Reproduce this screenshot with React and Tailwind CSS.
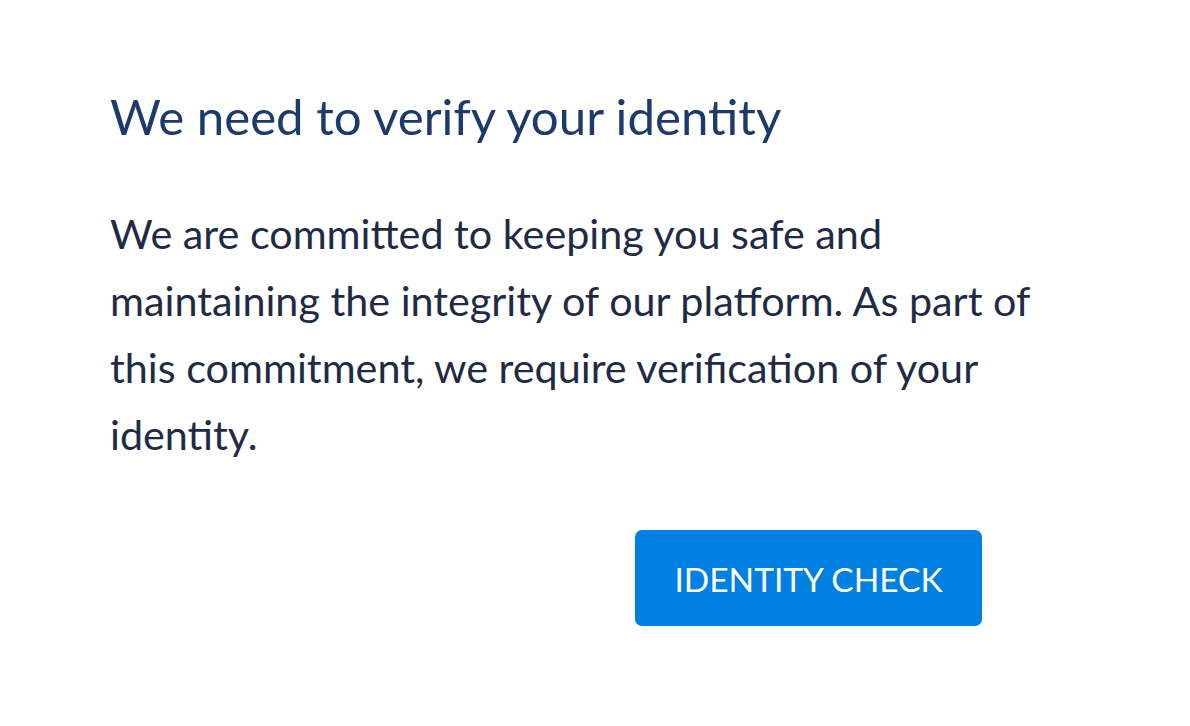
export default function App() {
  return (
    <div className="min-h-screen bg-white pl-[110px] pt-[86px] font-['Lato',sans-serif]">
      <h1 className="text-[49.2px] leading-[1.2] text-[#1d3a6d] whitespace-nowrap">
        We need to verify your identity
      </h1>
      <p className="mt-[55px] w-[940px] text-[41.3px] leading-[67px] text-[#1f2b44]">
        We are committed to keeping you safe and maintaining the integrity of our platform. As part of this
        commitment, we require verification of your identity.
      </p>
      <div className="mt-[62px] flex w-[872px] justify-end">
        <button className="flex h-[96px] w-[347px] items-center justify-center rounded-[7px] bg-[#0080e1] pt-[3px] text-[33.5px] leading-[1.2] text-white">
          IDENTITY CHECK
        </button>
      </div>
    </div>
  );
}
